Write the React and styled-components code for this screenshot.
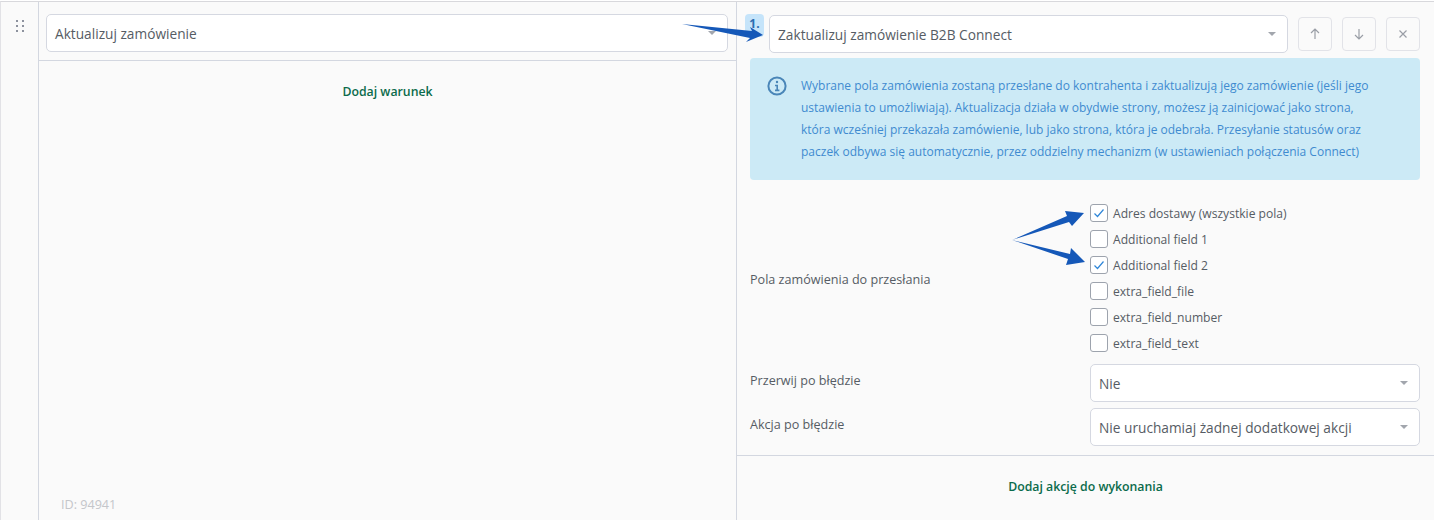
import React from 'react';
import styled, { createGlobalStyle } from 'styled-components';

const Global = createGlobalStyle`
html, body {
    margin: 0;
    padding: 0;
    background: #fff;
    overflow: hidden;
}
body {
    font-family: "Open Sans", sans-serif;
    font-size: 12px;
    color: #495057;
}
* { box-sizing: border-box; }
`

const Row = styled.div`
position: relative;
width: 1434px;
height: 519px;
margin-top: 1px;
display: flex;
overflow: hidden;
background: #fafafa;
border-top: 1px solid #d8d8dc;
border-left: 1px solid #e2e2e6;
`

const Handle = styled.div`
width: 38px;
flex: none;
border-right: 1px solid #d3d7e0;
padding: 18px 0 0 15px;
`

const DotGrid = styled.div`
display: grid;
grid-template-columns: 2px 2px;
grid-auto-rows: 2px;
gap: 3px 4px;
span { background: #8d929e; }
`

const Conditions = styled.div`
width: 698px;
flex: none;
border-right: 1px solid #d3d7e0;
position: relative;
`

const ConditionHead = styled.div`
height: 59px;
padding: 12px 8px 0 7px;
border-bottom: 1px solid #d3d7e0;
`

const Select = styled.div`
height: 38px;
display: flex;
align-items: center;
justify-content: space-between;
padding: 0 8px;
background: #fff;
border: 1px solid #d5d8e1;
border-radius: 5px;
font-size: 13.7px;
color: #565c64;
flex: ${p => p.$grow ? '1' : 'none'};
`

const Caret = styled.i`
width: 0;
height: 0;
border-left: 4px solid transparent;
border-right: 4px solid transparent;
border-top: 4px solid #a2a6ad;
margin-right: 3px;
`

const AddLink = styled.div`
text-align: center;
font-size: 12.3px;
font-weight: 600;
color: #0b6b4b;
padding-top: ${p => p.$top}px;
`

const Id = styled.div`
position: absolute;
left: 22px;
bottom: 7px;
font-size: 12.6px;
color: #c4c6ca;
`

const Actions = styled.div`
flex: 1;
display: flex;
flex-direction: column;
`

const ActionHead = styled.div`
display: flex;
align-items: flex-start;
padding: 12px 14px 0 8px;
height: 56px;
`

const Badge = styled.div`
width: 19px;
height: 23px;
margin-right: 5px;
background: #c5e4fa;
border-radius: 4px;
color: #2b6cb0;
font-size: 12px;
font-weight: 700;
text-align: center;
line-height: 20px;
`

const HeadSelect = styled(Select)`
margin-top: 1px;
margin-right: 10px;
`

const IconButton = styled.div`
width: 34px;
height: 34px;
margin-top: 3px;
margin-left: ${p => p.$first ? 0 : 10}px;
display: flex;
align-items: center;
justify-content: center;
border: 1px solid #e2e3e8;
border-radius: 4px;
color: #9a9ea6;
`

const Body = styled.div`
padding: 0 14px 0 13px;
`

const Alert = styled.div`
display: flex;
height: 122px;
padding: 17px 20px 0 17px;
background: #cceaf6;
border-radius: 4px;
color: #3f8bd0;
font-size: 12px;
line-height: 22px;
`

const AlertIcon = styled.div`
flex: none;
width: 34px;
color: #4a86b8;
padding-top: 1px;
`

const AlertText = styled.div`
width: 580px;
white-space: nowrap;
`

const FieldsRow = styled.div`
display: flex;
align-items: center;
margin-top: 24px;
`

const Label = styled.div`
width: 340px;
flex: none;
font-size: 12.6px;
color: #565c64;
`

const FieldsLabel = styled(Label)`
padding-top: 2px;
`

const Checks = styled.div`
display: flex;
flex-direction: column;
gap: 8px;
`

const Check = styled.div`
display: flex;
align-items: center;
height: 18px;
font-size: 12.1px;
color: #565c64;
`

const Box = styled.div`
width: 18px;
height: 18px;
margin-right: 5px;
display: flex;
align-items: center;
justify-content: center;
background: #fff;
border: 1px solid #9da3ad;
border-radius: 3px;
`

const SelectRow = styled.div`
display: flex;
height: 38px;
margin-top: ${p => p.$top}px;
`

const SelectLabel = styled(Label)`
padding-top: 8px;
`

const Footer = styled.div`
margin-top: 9px;
border-top: 1px solid #d3d7e0;
`

const Arrows = styled.svg`
position: absolute;
left: -1px;
top: -2px;
pointer-events: none;
`

const fields = [
    ['Adres dostawy (wszystkie pola)', true],
    ['Additional field 1', false],
    ['Additional field 2', true],
    ['extra_field_file', false],
    ['extra_field_number', false],
    ['extra_field_text', false]
]

const arrowFill = '#1558b8';

export default function App() {
    return (
        <Row>
            <Global />
            <Handle>
                <DotGrid>
                    {[0, 1, 2, 3, 4, 5].map(i => <span key={i} />)}
                </DotGrid>
            </Handle>
            <Conditions>
                <ConditionHead>
                    <Select>
                        Aktualizuj zamówienie
                        <Caret />
                    </Select>
                </ConditionHead>
                <AddLink $top={22}>Dodaj warunek</AddLink>
                <Id>ID: 94941</Id>
            </Conditions>
            <Actions>
                <ActionHead>
                    <Badge>1.</Badge>
                    <HeadSelect $grow>
                        Zaktualizuj zamówienie B2B Connect
                        <Caret />
                    </HeadSelect>
                    <IconButton $first>
                        <svg width="14" height="14" viewBox="0 0 14 14" fill="none" stroke="currentColor" strokeWidth="1.2"><path d="M7 12V2M3 6l4-4 4 4" /></svg>
                    </IconButton>
                    <IconButton>
                        <svg width="14" height="14" viewBox="0 0 14 14" fill="none" stroke="currentColor" strokeWidth="1.2"><path d="M7 2v10M3 8l4 4 4-4" /></svg>
                    </IconButton>
                    <IconButton>
                        <svg width="12" height="12" viewBox="0 0 12 12" fill="none" stroke="currentColor" strokeWidth="1.2"><path d="M2.5 2.5l7 7M9.5 2.5l-7 7" /></svg>
                    </IconButton>
                </ActionHead>
                <Body>
                    <Alert>
                        <AlertIcon>
                            <svg width="20" height="20" viewBox="0 0 20 20" fill="none" stroke="currentColor" strokeWidth="2">
                                <circle cx="10" cy="10" r="8.6" />
                                <circle cx="10" cy="6" r="0.6" fill="currentColor" strokeWidth="1.2" />
                                <path d="M8 9.5h2.2V14M8 14.4h4.4" strokeWidth="1.6" />
                            </svg>
                        </AlertIcon>
                        <AlertText>
                            Wybrane pola zamówienia zostaną przesłane do kontrahenta i zaktualizują jego zamówienie (jeśli jego<br />
                            ustawienia to umożliwiają). Aktualizacja działa w obydwie strony, możesz ją zainicjować jako strona,<br />
                            która wcześniej przekazała zamówienie, lub jako strona, która je odebrała. Przesyłanie statusów oraz<br />
                            paczek odbywa się automatycznie, przez oddzielny mechanizm (w ustawieniach połączenia Connect)
                        </AlertText>
                    </Alert>
                    <FieldsRow>
                        <FieldsLabel>Pola zamówienia do przesłania</FieldsLabel>
                        <Checks>
                            {fields.map(([name, checked]) => (
                                <Check key={name}>
                                    <Box>
                                        {checked && <svg width="12" height="12" viewBox="0 0 12 12" fill="none" stroke="#2f86d8" strokeWidth="1.2"><path d="M1.5 6.5l3 3 6-7" /></svg>}
                                    </Box>
                                    {name}
                                </Check>
                            ))}
                        </Checks>
                    </FieldsRow>
                    <SelectRow $top={12}>
                        <SelectLabel>Przerwij po błędzie</SelectLabel>
                        <Select $grow>
                            Nie
                            <Caret />
                        </Select>
                    </SelectRow>
                    <SelectRow $top={6}>
                        <SelectLabel>Akcja po błędzie</SelectLabel>
                        <Select $grow>
                            Nie uruchamiaj żadnej dodatkowej akcji
                            <Caret />
                        </Select>
                    </SelectRow>
                </Body>
                <Footer>
                    <AddLink $top={22}>Dodaj akcję do wykonania</AddLink>
                </Footer>
            </Actions>
            <Arrows width="1434" height="520" viewBox="0 0 1434 520">
                <path d="M682 24 L752 31 L750 27 L763 35 L746 42 L750 38 Z" fill={arrowFill} />
                <path d="M1012 240 L1067 216 L1065 211 L1084 213 L1072 226 L1069 222 Z" fill={arrowFill} />
                <path d="M1012 240 L1070 254 L1071 248 L1085 262 L1066 265 L1068 259 Z" fill={arrowFill} />
            </Arrows>
        </Row>
    );
}
